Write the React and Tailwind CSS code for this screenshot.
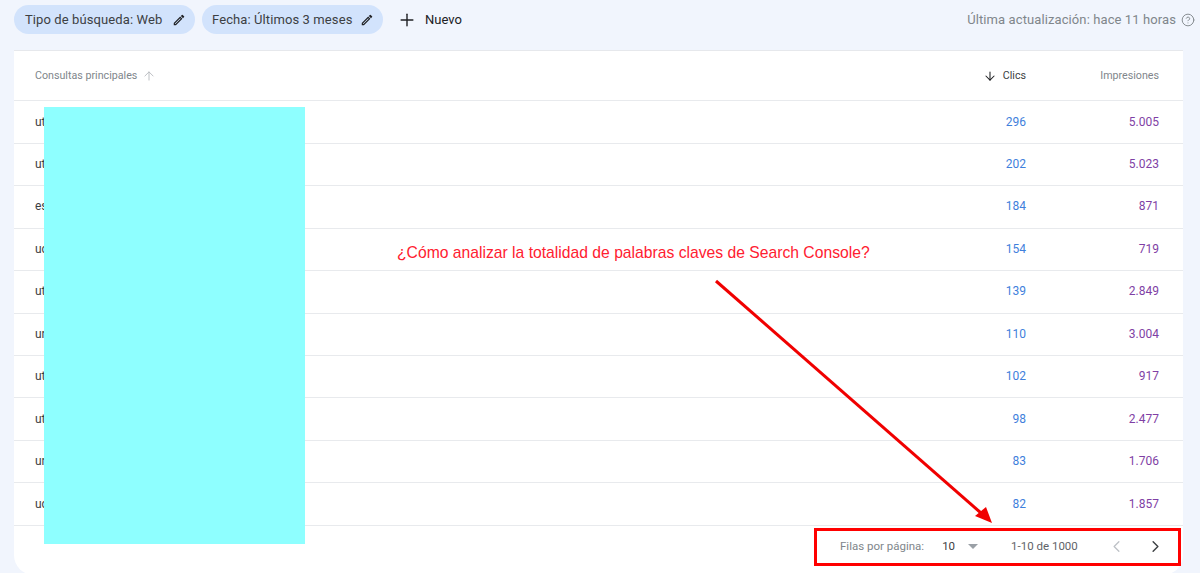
import { ArrowDown, ArrowUp, ChevronLeft, ChevronRight, CircleHelp, Plus } from 'lucide-react'

const rows = [
  ['ut', '296', '5.005'],
  ['ut', '202', '5.023'],
  ['es', '184', '871'],
  ['uc', '154', '719'],
  ['ut', '139', '2.849'],
  ['ur', '110', '3.004'],
  ['ut', '102', '917'],
  ['ut', '98', '2.477'],
  ['ur', '83', '1.706'],
  ['uc', '82', '1.857'],
]

function Pencil() {
  return (
    <svg width="14" height="14" viewBox="0 0 24 24" className="shrink-0 fill-[#202124]">
      <path d="M3 17.25V21h3.75L17.81 9.94l-3.75-3.75L3 17.25zM5.92 19H5v-.92l9.06-9.06.92.92L5.92 19zM20.71 7.04a1 1 0 0 0 0-1.41l-2.34-2.34a1 1 0 0 0-1.41 0l-1.83 1.83 3.75 3.75 1.83-1.83z" />
    </svg>
  )
}

function Chip({ label, width, pad }) {
  return (
    <div className={`flex h-[29px] items-center justify-between rounded-full bg-[#d2e3fc] pr-[9px] text-[13px] tracking-[0.1px] text-[#3c4043] ${pad} ${width}`}>
      <span>{label}</span>
      <Pencil />
    </div>
  )
}

export default function App() {
  return (
    <div className="relative h-[573px] w-[1200px] overflow-hidden bg-[#f1f5fd] font-['Roboto',sans-serif]">

      {/* Filters */}
      <div className="flex h-[50px] items-start pl-[14px] pr-[5px] pt-[5px]">
        <Chip label="Tipo de búsqueda: Web" width="w-[181px]" pad="pl-[11px]" />
        <div className="ml-[7px]">
          <Chip label="Fecha: Últimos 3 meses" width="w-[181px]" pad="pl-[10px]" />
        </div>
        <div className="ml-[14px] flex h-[29px] items-center gap-[8px] text-[13px] text-[#202124] [font-weight:450]">
          <Plus size={20} strokeWidth={1.7} />
          <span>Nuevo</span>
        </div>
        <div className="ml-auto flex h-[29px] items-center gap-[5px] text-[13px] tracking-[0.1px] text-[#80868b]">
          <span>Última actualización: hace 11 horas</span>
          <CircleHelp size={14} strokeWidth={1.6} />
        </div>
      </div>

      {/* Table */}
      <div className="ml-[14px] h-[525px] w-[1169px] rounded-b-[20px] border-t border-[#e6e8ec] bg-white">
        <div className="flex h-[50.4px] items-center border-b border-[#e8eaed] pl-[21px] pr-[24px] text-[10.7px] text-[#80868b]">
          <span>Consultas principales</span>
          <ArrowUp size={14} strokeWidth={1.5} className="ml-[5px] text-[#b4b7bb]" />
          <div className="ml-auto flex w-[100px] items-center justify-end text-[#3c4043] [font-weight:450]">
            <ArrowDown size={14} strokeWidth={1.8} className="mr-[6px] text-[#202124]" />
            <span>Clics</span>
          </div>
          <span className="w-[133px] text-right">Impresiones</span>
        </div>

        {rows.map(([query, clicks, impressions], i) => (
          <div key={i} className="flex h-[42.45px] items-center border-b border-[#e8eaed] pb-[1px] pl-[21px] pr-[24px] text-[12px]">
            <span className="text-[#3c4043]">{query}</span>
            <span className="ml-auto text-[#3f7fdc]">{clicks}</span>
            <span className="w-[133px] text-right text-[#7f3fa5]">{impressions}</span>
          </div>
        ))}

        {/* Pagination */}
        <div className="flex h-[42px] items-center pl-[826px] text-[11.5px] text-[#80868b]">
          <span>Filas por página:</span>
          <span className="ml-[18px] text-[#3c4043]">10</span>
          <span className="ml-[13px] h-0 w-0 border-x-[5px] border-t-[5px] border-x-transparent border-t-[#9aa0a6]" />
          <span className="ml-[33px] text-[#5f6368]">1-10 de 1000</span>
          <ChevronLeft size={19} strokeWidth={1.6} className="ml-[29px] text-[#bdc1c6]" />
          <ChevronRight size={19} strokeWidth={1.8} className="ml-[20px] text-[#3c4043]" />
        </div>
      </div>

      {/* Redaction and annotations on top of the screenshot */}
      <div className="absolute left-[44px] top-[107px] h-[437px] w-[261px] bg-[#8effff]" />
      <div className="absolute left-[397px] top-[241px] whitespace-nowrap font-['Liberation_Sans',sans-serif] text-[15.7px] text-[#ff2030]">
        ¿Cómo analizar la totalidad de palabras claves de Search Console?
      </div>
      <svg className="absolute left-[700px] top-[270px]" width="310" height="270" viewBox="0 0 310 270">
        <line x1="16" y1="11" x2="281" y2="243" stroke="#f00000" strokeWidth="3" />
        <polygon points="292,253 275,246 286,237" fill="#f00000" />
      </svg>
      <div className="absolute left-[814px] top-[528px] h-[38px] w-[367px] border-[3px] border-[#ff0000]" />
    </div>
  )
}
